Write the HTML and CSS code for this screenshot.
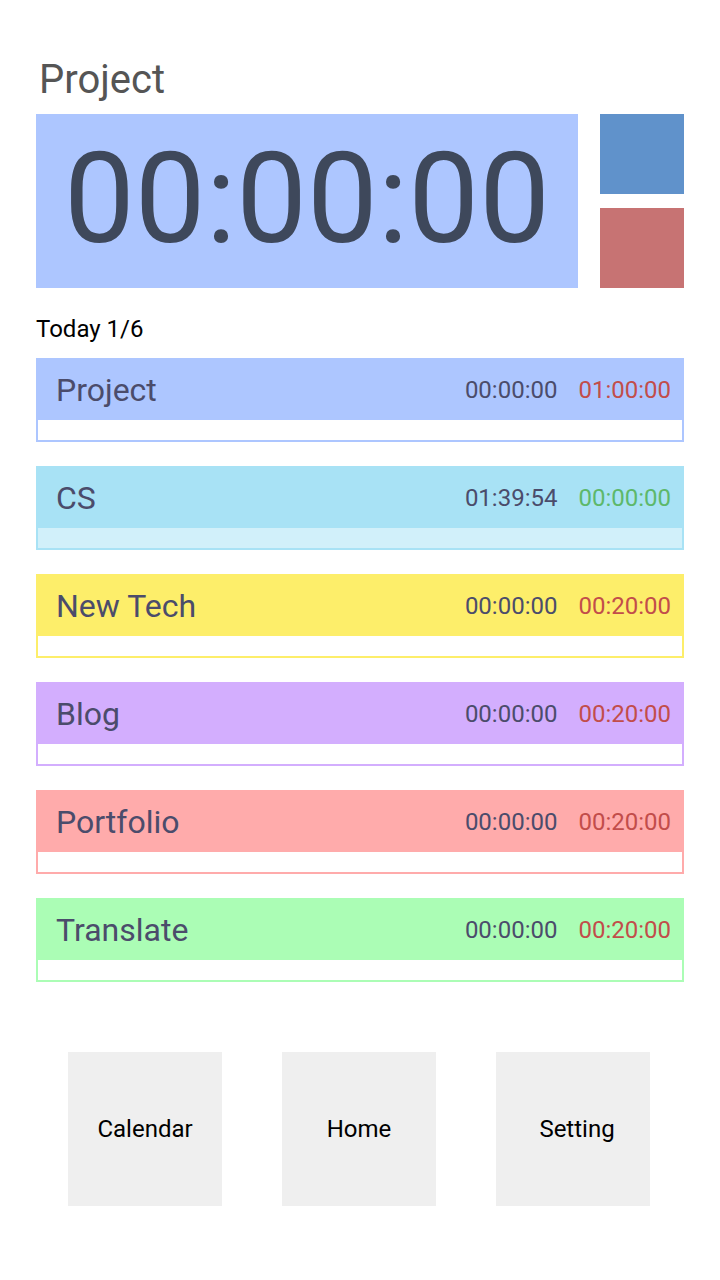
FILE: index.html
```html
<!DOCTYPE html>
<html>
<head>
<meta charset="utf-8">
<link rel="stylesheet" href="styles.css">
</head>
<body>
<div class="app">
  <h1 class="current">Project</h1>
  <div class="timer-row">
    <div class="timer">00:00:00</div>
    <div class="controls">
      <div class="ctrl ctrl-start"></div>
      <div class="ctrl ctrl-stop"></div>
    </div>
  </div>
  <div class="today">Today 1/6</div>
  <div class="tasks">
    <div class="task task-project">
      <div class="task-head"><span class="task-name">Project</span><span class="spent">00:00:00</span><span class="goal goal-red">01:00:00</span></div>
      <div class="progress"><div class="bar" style="width:0%"></div></div>
    </div>
    <div class="task task-cs">
      <div class="task-head"><span class="task-name">CS</span><span class="spent">01:39:54</span><span class="goal goal-green">00:00:00</span></div>
      <div class="progress"><div class="bar" style="width:100%"></div></div>
    </div>
    <div class="task task-newtech">
      <div class="task-head"><span class="task-name">New Tech</span><span class="spent">00:00:00</span><span class="goal goal-red">00:20:00</span></div>
      <div class="progress"><div class="bar" style="width:0%"></div></div>
    </div>
    <div class="task task-blog">
      <div class="task-head"><span class="task-name">Blog</span><span class="spent">00:00:00</span><span class="goal goal-red">00:20:00</span></div>
      <div class="progress"><div class="bar" style="width:0%"></div></div>
    </div>
    <div class="task task-portfolio">
      <div class="task-head"><span class="task-name">Portfolio</span><span class="spent">00:00:00</span><span class="goal goal-red">00:20:00</span></div>
      <div class="progress"><div class="bar" style="width:0%"></div></div>
    </div>
    <div class="task task-translate">
      <div class="task-head"><span class="task-name">Translate</span><span class="spent">00:00:00</span><span class="goal goal-red">00:20:00</span></div>
      <div class="progress"><div class="bar" style="width:0%"></div></div>
    </div>
  </div>
  <nav class="nav">
    <div class="nav-btn">Calendar</div>
    <div class="nav-btn">Home</div>
    <div class="nav-btn nav-btn-last">Setting</div>
  </nav>
</div>
</body>
</html>
```
FILE: styles.css
```css
* { box-sizing: border-box; }
html, body { margin: 0; padding: 0; background: #ffffff; }
body { font-family: Roboto, "Noto Sans", sans-serif; width: 720px; height: 1280px; overflow: hidden; }

.app { padding: 56px 36px 0 36px; }

.current {
  margin: 0;
  padding-left: 3px;
  font-size: 40px;
  line-height: 48px;
  font-weight: 400;
  color: #555555;
}

.timer-row {
  margin-top: 10px;
  display: flex;
  gap: 22px;
  height: 174px;
}
.timer {
  width: 542px;
  background: #adc6ff;
  color: #3e485b;
  font-size: 126px;
  display: flex;
  align-items: center;
  justify-content: center;
  line-height: 1;
  padding-bottom: 4px;
}
.controls {
  flex: 1;
  display: flex;
  flex-direction: column;
  gap: 14px;
}
.ctrl { height: 80px; }
.ctrl-start { background: #6092cb; }
.ctrl-stop { background: #c77373; }

.today {
  margin-top: 27px;
  font-size: 24px;
  line-height: 28px;
  color: #000000;
  padding-left: 0;
}

.tasks {
  margin-top: 15px;
  display: flex;
  flex-direction: column;
  gap: 24px;
}
.task {
  border: 2px solid var(--c);
  height: 84px;
}
.task-head {
  background: var(--c);
  height: 60px;
  display: flex;
  align-items: center;
  padding: 0 11px 0 18px;
  color: #4b4c6b;
}
.task-name { flex: 1; font-size: 32px; padding-bottom: 1px; }
.spent { font-size: 24px; }
.goal { font-size: 24px; margin-left: 21px; }
.goal-red { color: #c24d4a; }
.goal-green { color: #5db86a; }
.progress { height: 20px; background: #ffffff; }
.bar { height: 100%; background: var(--l); }

.task-project { --c: #adc6ff; --l: #d6e2ff; }
.task-cs { --c: #a8e2f5; --l: #d1f0fa; }
.task-newtech { --c: #fdee6a; --l: #fef6b4; }
.task-blog { --c: #d3aefe; --l: #e9d6ff; }
.task-portfolio { --c: #ffabab; --l: #ffd5d5; }
.task-translate { --c: #abfdb5; --l: #d5feda; }

.nav {
  margin-top: 70px;
  display: flex;
  padding-left: 32px;
  gap: 60px;
}
.nav-btn {
  width: 154px;
  height: 154px;
  background: #efefef;
  display: flex;
  align-items: center;
  justify-content: center;
  font-size: 24px;
  color: #000000;
}
.nav-btn-last { padding-left: 8px; }
```
